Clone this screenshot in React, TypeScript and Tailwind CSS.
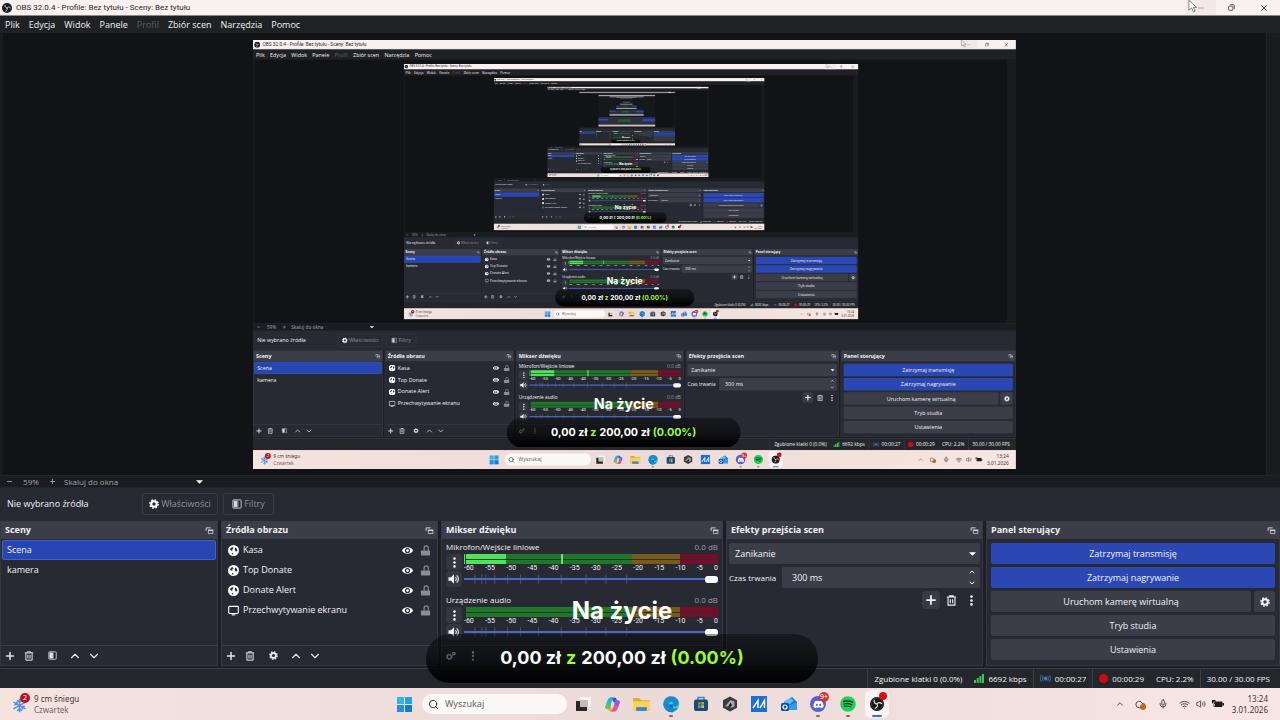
import React, { useId } from "react";
import { ChevronDown, ChevronUp, Cloud, Mic, Minus, Plus, Search, Volume2, Wifi, X } from "lucide-react";
import { FaDiscord, FaEdge, FaSpotify } from "react-icons/fa";

const MENU = ["Plik", "Edycja", "Widok", "Panele", "Profil", "Zbiór scen", "Narzędzia", "Pomoc"];
const SOURCES = [
  { name: "Kasa", kind: "browser" },
  { name: "Top Donate", kind: "browser" },
  { name: "Donate Alert", kind: "browser" },
  { name: "Przechwytywanie ekranu", kind: "display" },
];
const DB_TICKS = ["-60", "-55", "-50", "-45", "-40", "-35", "-30", "-25", "-20", "-15", "-10", "-5", "0"];
const FADER_MARKS = [11, 18, 22, 31, 44, 57, 75, 98, 123, 143, 164];

/* ---------- icons ---------- */

const ObsLogo = ({ className }: IconProps) => (
  <svg viewBox="0 0 24 24" className={className}>
    <circle cx="12" cy="12" r="12" fill="#15151a" />
    <circle cx="12" cy="12" r="9.6" fill="none" stroke="#5c595b" strokeWidth="0.7" />
    <path
      d="M12 12c-3.4-.3-5.6-2.6-4.6-6.3M12 12c2-2.8 5.200-3.400 7.800-.8M12 12c1.500 3.100.5 6.200-3 7.400"
      fill="none"
      stroke="#e8e4e6"
      strokeWidth="2"
      strokeLinecap="round"
    />
  </svg>
);

const Gear = ({ className }: IconProps) => (
  <svg viewBox="0 0 24 24" className={className} fill="none" stroke="currentColor">
    <circle cx="12" cy="12" r="6.600" strokeWidth="5" />
    <circle cx="12" cy="12" r="10" strokeWidth="3.400" strokeDasharray="4 3.854" />
  </svg>
);

const Trash = ({ className }: IconProps) => (
  <svg viewBox="0 0 24 24" className={className} fill="none" stroke="currentColor" strokeWidth="2.400">
    <path d="M2 4.500h20M8 4V2h8v2M4.500 5v17h15V5M9.500 9v9M14.500 9v9" />
  </svg>
);

const FilterIcon = ({ className }: IconProps) => (
  <svg viewBox="0 0 24 24" className={className}>
    <rect x="2" y="2" width="20" height="20" rx="2" fill="none" stroke="currentColor" strokeWidth="2" />
    <rect x="4" y="4" width="9" height="16" fill="currentColor" />
    <rect x="13" y="4" width="3" height="16" fill="currentColor" opacity="0.4" />
  </svg>
);

const Dots = ({ className }: IconProps) => (
  <svg viewBox="0 0 24 24" className={className} fill="currentColor">
    <circle cx="12" cy="3.500" r="2.800" />
    <circle cx="12" cy="12" r="2.800" />
    <circle cx="12" cy="20.500" r="2.800" />
  </svg>
);

const Globe = ({ className }: IconProps) => (
  <svg viewBox="0 0 24 24" className={className}>
    <circle cx="12" cy="12" r="12" fill="#fff" />
    <path d="M10 4.500 12 7 9.500 9l.5 2.500-3 1-2.500-2.500 1.500-3.500ZM15.500 5.500l3.500 2 1.500 4.500-2.500 2.500-2-2L14.500 10Z" fill="#272a33" />
    <path d="m9 17 3 1.500-1 2.500-2-1Z" fill="#272a33" />
  </svg>
);

const Display = ({ className }: IconProps) => (
  <svg viewBox="0 0 24 24" className={className} fill="none" stroke="#fff" strokeWidth="2.400">
    <rect x="1.500" y="3" width="21" height="15.500" rx="2" />
    <path d="M8 21.500h8" />
  </svg>
);

const Eye = ({ className }: IconProps) => (
  <svg viewBox="0 0 24 24" className={className}>
    <path d="M0 12C4 2.500 20 2.500 24 12 20 21.500 4 21.500 0 12Z" fill="#fff" />
    <circle cx="12" cy="12" r="5.600" fill="#272a33" />
    <circle cx="12" cy="12" r="3" fill="#fff" />
  </svg>
);

const LockOpen = ({ className }: IconProps) => (
  <svg viewBox="0 0 24 24" className={className}>
    <path d="M9 12V6.500a4.500 4.500 0 0 1 9 0V12" fill="none" stroke="#8d8e94" strokeWidth="2.600" />
    <rect x="2" y="12" width="20" height="11" rx="1.500" fill="#8d8e94" />
  </svg>
);

const Speaker = ({ className }: IconProps) => (
  <svg viewBox="0 0 24 24" className={className} fill="none" stroke="currentColor" strokeWidth="2.200">
    <path d="M1 8.500h5l6-6v19l-6-6H1Z" fill="currentColor" stroke="none" />
    <path d="M15 8q3 4 0 8M17.500 4.500q6.500 7.500 0 15" />
  </svg>
);

const PopOut = ({ className }: IconProps) => (
  <svg viewBox="0 0 24 24" className={className} fill="none" stroke="#d6d6db" strokeWidth="2">
    <path d="M3 13V5h12" strokeWidth="2.600" />
    <path d="M8 11.500h14" strokeWidth="4" />
    <path d="M9 12v8h12v-8" />
  </svg>
);

const Caret = ({ className }: IconProps) => (
  <svg viewBox="0 0 12 6" className={className}>
    <path d="M0 0h12L6 6Z" fill="#fff" />
  </svg>
);

/* ---------- shared pieces ---------- */

const IconButton: React.FC<IconButtonProps> = ({ label, children, raised }) => (
  <button
    aria-label={label}
    className={
      raised
        ? "flex size-[18px] items-center justify-center rounded-sm bg-[#383b45]"
        : "flex size-[18px] items-center justify-center rounded-sm"
    }
  >
    {children}
  </button>
);

const Dock: React.FC<DockProps> = ({ title, children }) => (
  <section className="flex min-w-0 flex-col border-x border-b border-[#353842] bg-[#272a33]">
    <header className="flex h-[18px] shrink-0 items-center justify-between bg-[#3b3d48] pr-[3px] pl-1">
      <h2 className="text-[9px] font-bold">{title}</h2>
      <button aria-label={"Odepnij: " + title}>
        <PopOut className="size-[9px]" />
      </button>
    </header>
    {children}
  </section>
);

const Meter: React.FC<MeterProps> = ({ name, live }) => {
  const id = useId();
  return (
    <div className="flex h-[53px] flex-col px-1 pt-[2px]">
      <div className="mb-[2px] flex h-[11px] items-center justify-between text-[8px] leading-[11px]">
        <label htmlFor={id}>{name}</label>
        <span className="text-[#9b9ca3]">0.0 dB</span>
      </div>
      <div className="flex">
        <div className="flex w-[18px] shrink-0 flex-col gap-px">
          <button aria-label="Opcje" className="flex size-4 items-center justify-center rounded-sm bg-[#343741]">
            <Dots className="size-[11px]" />
          </button>
          <button aria-label="Wycisz" className="flex size-4 items-center justify-center rounded-sm bg-[#343741]">
            <Speaker className="size-3" />
          </button>
        </div>
        <div className="min-w-0 flex-1">
          <div className="relative flex h-[10px] pl-[2px]">
            {live && <i className="w-[16%] bg-[#4de45c]" />}
            <i className="flex-1 bg-[#21762a]" />
            <i className="w-[19%] bg-[#7c581b]" />
            <i className="w-[15%] bg-[#7a0c2b]" />
            <i className="absolute inset-x-0 top-[5px] h-px bg-[#153c20]" />
            {live && <i className="absolute inset-y-0 left-0 w-px bg-[#4de45c]" />}
            {live && <i className="absolute inset-y-0 left-[38%] w-[2px] bg-[#5fe86c]" />}
          </div>
          <div className="flex h-[9px] justify-between font-['Roboto'] text-[7px] leading-[9px]">
            {DB_TICKS.map((t) => (
              <span key={t}>{t}</span>
            ))}
          </div>
          <div className="relative flex h-3 items-center">
            <svg viewBox="0 0 256 9" preserveAspectRatio="none" className="absolute inset-0 size-full">
              {FADER_MARKS.map((x) => (
                <path key={x} d={`M${x} 1v7`} stroke="#50535f" />
              ))}
            </svg>
            <input
              id={id}
              type="range"
              defaultValue={100}
              className="relative h-[2px] w-full appearance-none bg-[#4b69cd] [&::-webkit-slider-thumb]:h-[7px] [&::-webkit-slider-thumb]:w-[13px] [&::-webkit-slider-thumb]:appearance-none [&::-webkit-slider-thumb]:rounded-[3px] [&::-webkit-slider-thumb]:bg-white"
            />
          </div>
        </div>
      </div>
    </div>
  );
};

const TitleBar = () => (
  <div className="flex h-4 shrink-0 items-center justify-between border-b border-[#8a8788] bg-[#f9f0f0] pl-[2px] text-[#2b2b2b]">
    <div className="flex items-center gap-1">
      <ObsLogo className="size-[10px]" />
      <span className="font-['Roboto'] text-[8px]">OBS 32.0.4 - Profile: Bez tytułu - Sceny: Bez tytułu</span>
    </div>
    <div className="flex h-full items-center">
      <button aria-label="Minimalizuj" className="relative flex h-full w-[30px] items-center justify-center bg-[#f4e9e9]">
        <Minus className="size-2 text-[#8a8788]" strokeWidth={2} />
        {/* mouse pointer */}
        <svg viewBox="0 0 10 14" className="absolute top-0 left-[2px] h-[13px] w-[9px]">
          <path d="M1 0v11l3-2.500 2 4.500 2-1-2-4h3.500Z" fill="#fff" stroke="#555" strokeWidth="0.8" />
        </svg>
      </button>
      <button aria-label="Przywróć" className="flex h-full w-[31px] items-center justify-center">
        <svg viewBox="0 0 10 10" className="size-[7px]" fill="none" stroke="#222">
          <rect x="1" y="3" width="6" height="6" rx="1" />
          <path d="M3 1h5q1 0 1 1v5" />
        </svg>
      </button>
      <button aria-label="Zamknij" className="flex h-full w-[33px] items-center justify-center">
        <X className="size-[10px]" strokeWidth={2} />
      </button>
    </div>
  </div>
);

const MenuBar = () => (
  <nav className="flex h-[17px] shrink-0 items-center gap-[9px] bg-[#1f2125] px-[5px]">
    {MENU.map((item) => (
      <button key={item} className={item === "Profil" ? "text-[#5c5e63]" : ""}>
        {item}
      </button>
    ))}
  </nav>
);

/* the far end of the screen-in-screen tunnel, where only bars are left */
const Tunnel = () => (
  <svg viewBox="0 0 1280 720" className="size-full">
    {[0, 1, 2, 3, 4].map((n) => {
      const s = Math.pow(0.596, n);
      return (
        <g key={n} transform={`translate(${626 * (1 - s)} ${99 * (1 - s)}) scale(${s})`}>
          <rect width="1280" height="720" fill="#17181d" />
          <rect width="1280" height="36" fill="#a5a1a2" />
          <rect y="500" width="1280" height="188" fill="#2c2f3c" />
          <rect y="540" width="218" height="40" fill="#2b48b2" />
          <rect x="441" y="550" width="280" height="60" fill="#21602e" />
          <rect x="990" y="540" width="285" height="60" fill="#2b48b2" />
          <rect y="672" width="1280" height="48" fill="#cfc4c3" />
        </g>
      );
    })}
  </svg>
);

const Preview: React.FC<DesktopProps> = ({ depth }) => (
  <div className="flex min-h-0 flex-1 bg-[#121317]">
    <div className="w-[3px] bg-[#1a1b1f]" />
    <div className="flex min-w-0 flex-1 items-center justify-center">
      {/* captured display: the whole desktop again, 59% of its size */}
      <div inert aria-hidden="true" className="h-[429px] w-[763px] shrink-0 overflow-hidden">
        {depth > 0 ? (
          <div className="h-[720px] w-[1280px] origin-top-left scale-[0.596]">
            <Desktop depth={depth - 1} />
          </div>
        ) : (
          <Tunnel />
        )}
      </div>
    </div>
    <div className="w-[14px] border-l border-[#222327] bg-[#1a1b1e]" />
  </div>
);

const ZoomBar = () => (
  <div className="flex h-[13px] shrink-0 items-center border-y border-[#25262b] bg-[#1b1c20] pl-[6px] text-[8px] text-[#a3a4a9]">
    <button aria-label="Pomniejsz">
      <Minus className="size-[7px]" strokeWidth={3} />
    </button>
    <span className="w-9 text-center">59%</span>
    <button aria-label="Powiększ">
      <Plus className="size-[7px]" strokeWidth={3} />
    </button>
    <button className="ml-2 flex w-[139px] items-center justify-between">
      Skaluj do okna
      <Caret className="h-1 w-[7px]" />
    </button>
  </div>
);

const ContextBar = () => (
  <div className="flex h-[33px] shrink-0 items-center bg-[#272a33] pb-px">
    <span className="w-[142px] pl-[7px]">Nie wybrano źródła</span>
    <button className="flex h-[22px] w-[76px] items-center justify-center gap-[2px] rounded-[3px] border border-[#3a3c45] text-[#8f9096]">
      <Gear className="size-[10px] text-white" />
      Właściwości
    </button>
    <button className="ml-[5px] flex h-[22px] w-[51px] items-center justify-center gap-[2px] rounded-[3px] border border-[#3a3c45] text-[#8f9096]">
      <FilterIcon className="size-[10px] text-[#d6d7dc]" />
      Filtry
    </button>
  </div>
);

const Scenes = () => (
  <Dock title="Sceny">
    <ul className="flex-1 px-px pt-px">
      <li className="flex h-5 items-center rounded-[2px] border border-[#4262c4] bg-[#2746b4] px-1">Scena</li>
      <li className="flex h-5 items-center px-[5px]">kamera</li>
    </ul>
    <div className="flex h-5 items-center gap-px border-t border-[#3b3e49] text-[#e6e6ea]">
      <IconButton label="Dodaj scenę">
        <Plus className="size-3" strokeWidth={3} />
      </IconButton>
      <IconButton label="Usuń scenę">
        <Trash className="size-[10px]" />
      </IconButton>
      <div className="w-[3px]" />
      <IconButton label="Filtry sceny">
        <FilterIcon className="size-[9px]" />
      </IconButton>
      <div className="w-[3px]" />
      <IconButton label="W górę">
        <ChevronUp className="size-[14px]" strokeWidth={2} />
      </IconButton>
      <IconButton label="W dół">
        <ChevronDown className="size-[14px]" strokeWidth={2} />
      </IconButton>
    </div>
  </Dock>
);

const Sources = () => (
  <Dock title="Źródła obrazu">
    <ul className="flex-1 pt-px">
      {SOURCES.map((s) => (
        <li key={s.name} className="flex h-5 items-center pr-[6px] pl-[6px]">
          {s.kind === "browser" ? <Globe className="size-[11px]" /> : <Display className="size-[11px]" />}
          <span className="ml-1 flex-1">{s.name}</span>
          <button aria-label={"Widoczność: " + s.name}>
            <Eye className="size-[11px]" />
          </button>
          <button aria-label={"Blokada: " + s.name} className="ml-[7px]">
            <LockOpen className="size-[11px]" />
          </button>
        </li>
      ))}
    </ul>
    <div className="flex h-5 items-center gap-px border-t border-[#3b3e49] text-[#e6e6ea]">
      <IconButton label="Dodaj źródło">
        <Plus className="size-3" strokeWidth={3} />
      </IconButton>
      <IconButton label="Usuń źródło">
        <Trash className="size-[10px]" />
      </IconButton>
      <div className="w-[3px]" />
      <IconButton label="Właściwości źródła">
        <Gear className="size-[9px]" />
      </IconButton>
      <div className="w-[3px]" />
      <IconButton label="W górę">
        <ChevronUp className="size-[14px]" strokeWidth={2} />
      </IconButton>
      <IconButton label="W dół">
        <ChevronDown className="size-[14px]" strokeWidth={2} />
      </IconButton>
    </div>
  </Dock>
);

const Mixer = () => (
  <Dock title="Mikser dźwięku">
    <div className="flex-1">
      <Meter name="Mikrofon/Wejście liniowe" live />
      <Meter name="Urządzenie audio" />
    </div>
    <div className="flex h-5 items-center gap-1 border-t border-[#3b3e49] text-[#e6e6ea]">
      <IconButton label="Zaawansowane">
        <svg viewBox="0 0 24 24" className="size-[10px]" fill="none" stroke="currentColor">
          <circle cx="8" cy="14" r="5" strokeWidth="3" />
          <circle cx="8" cy="14" r="7.500" strokeWidth="2" strokeDasharray="3 2.900" />
          <circle cx="19" cy="6" r="3" strokeWidth="3" />
        </svg>
      </IconButton>
      <IconButton label="Opcje miksera">
        <Dots className="size-[10px]" />
      </IconButton>
    </div>
  </Dock>
);

const Transitions = () => {
  const id = useId();
  return (
    <Dock title="Efekty przejścia scen">
      <div className="flex flex-1 flex-col gap-[3px] px-[2px] pt-1">
        <div className="relative">
          <select
            aria-label="Efekt przejścia"
            className="block h-[21px] w-full appearance-none rounded-[2px] bg-[#3b3d48] px-[6px]"
          >
            <option>Zanikanie</option>
          </select>
          <Caret className="pointer-events-none absolute top-[9px] right-1 h-1 w-[7px]" />
        </div>
        <div className="flex h-[21px] items-center">
          <label htmlFor={id} className="w-[53px] shrink-0 text-[8px] whitespace-nowrap">
            Czas trwania
          </label>
          <div className="flex h-full min-w-0 flex-1 rounded-[2px] bg-[#3b3d48]">
            <input id={id} defaultValue="300 ms" className="min-w-0 flex-1 bg-transparent px-[10px]" />
            <div className="flex w-4 flex-col items-center justify-around">
              <button aria-label="Więcej">
                <ChevronUp className="size-2" strokeWidth={3} />
              </button>
              <button aria-label="Mniej">
                <ChevronDown className="size-2" strokeWidth={3} />
              </button>
            </div>
          </div>
        </div>
        <div className="flex justify-end gap-[2px]">
          <IconButton label="Dodaj efekt" raised>
            <Plus className="size-[14px]" strokeWidth={3} />
          </IconButton>
          <IconButton label="Usuń efekt">
            <Trash className="size-[11px]" />
          </IconButton>
          <IconButton label="Opcje efektu">
            <Dots className="size-[11px]" />
          </IconButton>
        </div>
      </div>
    </Dock>
  );
};

const Controls = () => (
  <Dock title="Panel sterujący">
    <div className="flex flex-1 flex-col gap-[3px] px-1 pt-1">
      <button className="h-[21px] rounded-[2px] bg-[#2b48b2]">Zatrzymaj transmisję</button>
      <button className="h-[21px] rounded-[2px] bg-[#2b48b2]">Zatrzymaj nagrywanie</button>
      <div className="flex gap-[3px]">
        <button className="h-[21px] flex-1 rounded-[2px] bg-[#3b3d48]">Uruchom kamerę wirtualną</button>
        <button
          aria-label="Ustawienia kamery"
          className="flex h-[21px] w-[21px] items-center justify-center rounded-[2px] bg-[#3b3d48]"
        >
          <Gear className="size-[10px]" />
        </button>
      </div>
      <button className="h-[21px] rounded-[2px] bg-[#3b3d48]">Tryb studia</button>
      <button className="h-[21px] rounded-[2px] bg-[#3b3d48]">Ustawienia</button>
    </div>
  </Dock>
);

const StatusBar = () => (
  <footer className="mt-[2px] flex h-5 shrink-0 items-center justify-end border-t border-[#3b3e49] bg-[#24262c] pr-1 text-[8px]">
    <span className="flex h-full items-center border-l border-[#3b3e49] px-[6px]">Zgubione klatki 0 (0.0%)</span>
    <span className="flex h-full items-center gap-1 px-[6px]">
      <svg viewBox="0 0 10 9" className="h-[9px] w-[10px]" fill="#35c94a">
        <path d="M0 6h2v3H0ZM2.700 4h2v5h-2ZM5.400 2h2v7h-2ZM8 0h2v9H8Z" />
      </svg>
      6692 kbps
    </span>
    <span className="flex h-full items-center gap-1 border-l border-[#3b3e49] px-[6px]">
      <svg viewBox="0 0 12 10" className="h-[9px] w-[11px]" fill="none" stroke="#3f6fb5">
        <circle cx="6" cy="5" r="1.800" fill="#4b86d6" />
        <path d="M3.500 2q-2 3 0 6M8.500 2q2 3 0 6M1.500 1q-2.500 4 0 8M10.500 1q2.500 4 0 8" />
      </svg>
      00:00:27
    </span>
    <span className="flex h-full items-center gap-1 border-l border-[#3b3e49] px-[6px]">
      <i className="size-[9px] rounded-full bg-[#cc0a12]" />
      00:00:29
    </span>
    <span className="flex h-full items-center px-[6px]">CPU: 2.2%</span>
    <span className="flex h-full items-center border-l border-[#3b3e49] px-[6px]">30.00 / 30.00 FPS</span>
  </footer>
);

/* ---------- windows taskbar ---------- */

const TaskIcon: React.FC<TaskIconProps> = ({ label, children, running }) => (
  <button aria-label={label} className="relative flex h-6 w-5 items-center justify-center">
    {children}
    {running && <i className="absolute -bottom-px left-2 h-[2px] w-1 rounded-full bg-[#77706f]" />}
  </button>
);

const Taskbar = () => {
  const id = useId();
  return (
    <div className="grid h-8 shrink-0 grid-cols-[1fr_auto_1fr] items-center bg-linear-to-r from-[#f5e3e0] via-[#ecdad8] to-[#f7e6e1] font-['Noto_Sans'] text-[#3c3838]">
      <div className="flex items-center gap-[3px] pl-3">
        <div className="relative size-[19px]">
          <svg viewBox="0 0 24 24" className="size-[18px]" fill="none" stroke="#4f93dc" strokeWidth="2">
            <path d="M10 5v18M2 9.500l16 9M18 9.500l-16 9M7 7l3 3 3-3M7 21l3-3 3 3M3 13l4-.5-1-4M17 15l-4 .5 1 4" />
          </svg>
          <span className="absolute -top-[2px] left-2 flex size-[10px] items-center justify-center rounded-full bg-[#b51226] text-[7px] text-white">
            2
          </span>
        </div>
        <div className="text-[8px] leading-[11px]">
          <div>9 cm śniegu</div>
          <div className="text-[#6d6565]">Czwartek</div>
        </div>
      </div>

      <div className="flex items-center pl-1">
        <button aria-label="Start" className="grid size-[15px] grid-cols-2 gap-px">
          <i className="bg-[#35b4ee]" />
          <i className="bg-[#2a9fe6]" />
          <i className="bg-[#1f92df]" />
          <i className="bg-[#107cd0]" />
        </button>
        <div className="ml-[10px] flex h-5 w-[145px] items-center rounded-full bg-[#fcf8f7] pl-[6px]">
          <Search className="size-[11px] text-[#222]" strokeWidth={2} />
          <label htmlFor={id} className="sr-only">
            Wyszukaj
          </label>
          <input
            id={id}
            placeholder="Wyszukaj"
            className="min-w-0 flex-1 bg-transparent pl-[6px] text-[9px] placeholder:text-[#6a6464]"
          />
        </div>
        <div className="ml-[6px] flex w-[314px] justify-between">
          <TaskIcon label="Widok zadań">
            <svg viewBox="0 0 16 16" className="size-4">
              <rect x="5" y="1" width="11" height="10" fill="#f5f3f3" />
              <path d="M1 5h4v6h7v4H1Z" fill="#2a2727" />
              <rect x="5" y="4" width="8" height="7" fill="#c3bcbb" />
            </svg>
          </TaskIcon>
          <TaskIcon label="Copilot">
            <svg viewBox="0 0 24 24" className="size-[17px]">
              <path d="M9 2h6q2 0 3 3l1 4h-5l-2-3q-1-2-3-2Z" fill="#1c62d4" />
              <path d="M9 2Q6 2 5 6L2 14q-1 4 3 4h3l3-11q1-3 3-3Z" fill="#25b3d8" />
              <path d="M5 10l-3 5q-1 3 3 3h4l1-4Z" fill="#6bc24b" />
              <path d="M15 22h-6q-2 0-3-3l-1-1h5q2 0 3-2l2 2Z" fill="#f3a43b" />
              <path d="M15 22q3 0 4-4l3-8q1-4-3-4h-3l-3 11q-1 4-4 5Z" fill="#e0529c" />
              <path d="M19 6q4 0 3 4l-2 5-5-4 1-5Z" fill="#9a57dd" />
            </svg>
          </TaskIcon>
          <TaskIcon label="Eksplorator plików">
            <svg viewBox="0 0 16 16" className="size-[17px]">
              <path d="M0 2h6l2 2h8v10H0Z" fill="#e5a824" />
              <path d="M0 5h16v9H0Z" fill="#fbd25b" />
              <path d="M3 10.500h10V14H3Z" fill="#2f86d6" />
            </svg>
          </TaskIcon>
          <TaskIcon label="Edge" running>
            <svg viewBox="0 0 24 24" className="absolute size-[17px]">
              <circle cx="12" cy="12" r="11" fill="#4fd0a0" />
              <path d="M1 12h13v11Q3 24 1 12Z" fill="#0d5fb5" />
            </svg>
            <FaEdge className="relative size-4 text-[#168ad6]" />
          </TaskIcon>
          <TaskIcon label="Sklep">
            <svg viewBox="0 0 16 16" className="size-4">
              <path d="M5 4V1.500h6V4" fill="none" stroke="#2e8fd8" strokeWidth="1.500" />
              <rect x="1" y="3.500" width="14" height="11.500" rx="2" fill="#1d4a73" />
              <path d="M5 6h2.700v2.700H5Z" fill="#f0592b" />
              <path d="M8.300 6H11v2.700H8.300Z" fill="#84c034" />
              <path d="M5 9.300h2.700V12H5Z" fill="#2ba5ea" />
              <path d="M8.300 9.300H11V12H8.300Z" fill="#fbbd1e" />
            </svg>
          </TaskIcon>
          <TaskIcon label="Armoury">
            <svg viewBox="0 0 16 16" className="size-4">
              <path d="m8 .5 7 3.700v7.600L8 15.500 1 11.800V4.200Z" fill="#3a3c40" />
              <path d="M3 10.500 8.500 4l4 1.500v5L8.500 12l1-4.500-3.500 3Z" fill="#a6a9ad" />
              <path d="M8.500 6.500 10 10l-3.500.5Z" fill="#17181b" />
            </svg>
          </TaskIcon>
          <TaskIcon label="MyASUS">
            <svg viewBox="0 0 16 16" className="size-4">
              <rect width="16" height="16" fill="#1a6fd0" />
              <path d="M2 12 7 4.500V12M9 12l4.500-7.500V12" fill="none" stroke="#fff" strokeWidth="1.500" />
            </svg>
          </TaskIcon>
          <TaskIcon label="Outlook">
            <svg viewBox="0 0 16 16" className="size-4">
              <path d="M3 6 11 1l5 5v8H4Z" fill="#1c6fd0" />
              <path d="M3 5.500 10 2l3 3-7 5Z" fill="#58c2f4" />
              <path d="m6 10 10-4v8H6Z" fill="#2f9bea" />
              <rect y="7" width="8" height="8" rx="1.500" fill="#0d4f9f" />
              <circle cx="4" cy="11" r="2" fill="none" stroke="#fff" strokeWidth="1.200" />
            </svg>
          </TaskIcon>
          <TaskIcon label="Discord" running>
            <span className="flex size-4 items-center justify-center rounded-full bg-[#5560d6]">
              <FaDiscord className="size-[11px] text-white" />
            </span>
            <span className="absolute top-0 -right-px flex h-[10px] w-[10px] items-center justify-center rounded-full bg-[#d13438] text-[7px] text-white">
              9+
            </span>
          </TaskIcon>
          <TaskIcon label="Spotify" running>
            <span className="absolute size-3 rounded-full bg-[#123a20]" />
            <FaSpotify className="relative size-4 text-[#1fd05f]" />
          </TaskIcon>
          <button
            aria-label="OBS Studio"
            className="relative flex h-6 w-5 items-center justify-center rounded-sm bg-[#faf3f2] ring-2 ring-[#faf3f2]"
          >
            <ObsLogo className="size-[14px]" />
            <i className="absolute top-0 right-0 size-2 rounded-full bg-[#e30b13]" />
            <i className="absolute -bottom-px left-[5px] h-[2px] w-[10px] rounded-full bg-[#2f74cf]" />
          </button>
        </div>
      </div>

      <div className="flex items-center justify-end pr-3">
        <ChevronUp className="mr-[10px] size-[10px]" strokeWidth={2} />
        <span className="relative mr-3">
          <Cloud className="size-[11px]" strokeWidth={2} />
          <i className="absolute right-0 bottom-0 size-[6px] rounded-full bg-[#c0691a]" />
        </span>
        <Mic className="mr-[11px] size-[10px]" strokeWidth={2} />
        <Wifi className="mr-[6px] size-[11px]" strokeWidth={2} />
        <Volume2 className="mr-[6px] size-[10px]" strokeWidth={2} />
        <svg viewBox="0 0 24 16" className="mr-[6px] h-2 w-3">
          <rect x="3" y="3" width="18" height="11" rx="2" fill="#1d1b1b" />
          <path d="M21 6h3v5h-3ZM0 0h7v7H0Z" fill="#1d1b1b" />
          <path d="m5 3-3 5h3l-1 5" fill="none" stroke="#f3e2df" strokeWidth="1.500" />
        </svg>
        <div className="w-[38px] text-right text-[8px] leading-[11px]">
          <div>13:24</div>
          <div>3.01.2026</div>
        </div>
      </div>
    </div>
  );
};

/* stream goal drawn over everything */
const GoalOverlay = () => (
  <div className="pointer-events-none absolute inset-x-0 bottom-[37px] flex flex-col items-center pr-9 font-['Inter'] font-bold text-white">
    <div className="mb-[7px] text-2xl leading-8">Na życie</div>
    <div className="flex h-[49px] w-[392px] items-center justify-center gap-[5px] rounded-3xl bg-linear-to-b from-black/40 via-black/60 to-black pb-[2px] text-lg">
      <span>0,00 zł</span>
      <span className="text-[#9dfb35]">z</span>
      <span>200,00 zł</span>
      <span className="text-[#9dfb35]">(0.00%)</span>
    </div>
  </div>
);

const Desktop: React.FC<DesktopProps> = ({ depth }) => {
  return (
    <div className="relative flex h-full flex-col overflow-hidden bg-[#1d1f24] font-['Open_Sans',sans-serif] text-[9px] leading-3 text-[#f2f2f4]">
      <TitleBar />
      <MenuBar />
      <Preview depth={depth} />
      <ZoomBar />
      <ContextBar />
      <div className="grid h-[145px] shrink-0 grid-cols-[218fr_217fr_282fr_257fr_294fr] gap-[3px]">
        <Scenes />
        <Sources />
        <Mixer />
        <Transitions />
        <Controls />
      </div>
      <StatusBar />
      <Taskbar />
      <GoalOverlay />
    </div>
  );
};

export default function App() {
  return (
    <main className="h-screen w-full overflow-hidden">
      <Desktop depth={5} />
    </main>
  );
}

interface IconProps {
  className?: string;
}

interface IconButtonProps {
  label: string;
  raised?: boolean;
  children: React.ReactNode;
}

interface DockProps {
  title: string;
  children: React.ReactNode;
}

interface MeterProps {
  name: string;
  live?: boolean;
}

interface DesktopProps {
  depth: number;
}

interface TaskIconProps {
  label: string;
  running?: boolean;
  children: React.ReactNode;
}
